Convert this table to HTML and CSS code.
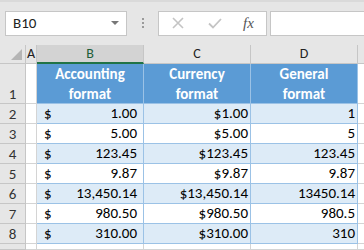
FILE: index.html
```html
<!doctype html>
<html lang="en">
    <head>
        <meta charset="UTF-8" />
        <title>Accounting vs Currency format</title>
        <link rel="stylesheet" href="styles.css">
    </head>
    <body>
        <div class="toolbar">
            <div class="name-box">
                <span>B10</span>
                <svg class="caret" width="8" height="4" viewBox="0 0 8 4"><path d="M0 0h8L4 4z" fill="#777"/></svg>
            </div>
            <div class="grip">
                <span></span><span></span><span></span>
            </div>
            <div class="fx-buttons">
                <svg width="14" height="14" viewBox="0 0 14 14"><path d="M2 2l10 10M12 2L2 12" stroke="#c4c4c4" stroke-width="1.6" fill="none"/></svg>
                <svg width="16" height="14" viewBox="0 0 16 14"><path d="M2 7.5l4 4L14 3" stroke="#c4c4c4" stroke-width="1.8" fill="none"/></svg>
                <span class="fx">fx</span>
            </div>
            <div class="formula"></div>
        </div>

        <div class="sheet head">
            <div class="corner"><span class="tri"></span></div>
            <div class="col-head">A</div>
            <div class="col-head selected">B</div>
            <div class="col-head">C</div>
            <div class="col-head">D</div>
            <div class="col-head last"></div>

            <div class="row-head tall">1</div>
            <div class="cell"></div>
            <div class="cell th">Accounting<br>format</div>
            <div class="cell th">Currency<br>format</div>
            <div class="cell th">General<br>format</div>
            <div class="cell blank"></div>
        </div>

        <div class="sheet" id="rows"></div>

        <script>
            const data = [
                ['1.00', '$1.00', '1'],
                ['5.00', '$5.00', '5'],
                ['123.45', '$123.45', '123.45'],
                ['9.87', '$9.87', '9.87'],
                ['13,450.14', '$13,450.14', '13450.14'],
                ['980.50', '$980.50', '980.5'],
                ['310.00', '$310.00', '310'],
            ];
            const rows = document.getElementById('rows');
            let html = '';
            data.forEach((r, i) => {
                const band = i % 2 === 0 ? ' band' : '';
                html += `<div class="row-head">${i + 2}</div>`;
                html += `<div class="cell"></div>`;
                html += `<div class="cell acc${band}"><span>$</span><span>${r[0]}</span></div>`;
                html += `<div class="cell num cur${band}">${r[1]}</div>`;
                html += `<div class="cell num gen${band}">${r[2]}</div>`;
                html += `<div class="cell blank"></div>`;
            });
            // row 9 is only partly in view
            html += `<div class="row-head partial"></div>`;
            html += `<div class="cell partial"></div><div class="cell partial"></div><div class="cell partial"></div><div class="cell partial"></div><div class="cell blank partial"></div>`;
            rows.innerHTML = html;
        </script>
    </body>
</html>
```

FILE: styles.css
```css
* {
    margin: 0;
    padding: 0;
    box-sizing: border-box;
}

body {
    font-family: Carlito, Lato, "Liberation Sans", sans-serif;
    background: #fff;
    color: #000;
    overflow: hidden;
    width: 364px;
    height: 250px;
}

.toolbar {
    display: flex;
    align-items: center;
    height: 45px;
    padding: 9px 0 10px 5px;
    background: #e6e6e6;
    border-top: 2px solid #dadada;
}

.name-box {
    width: 122px;
    height: 25px;
    background: #fff;
    border: 1px solid #c6c6c6;
    display: flex;
    align-items: center;
    justify-content: space-between;
    padding: 0 7px 0 7px;
    font-size: 15px;
    color: #222;
}

.grip {
    width: 31px;
    display: flex;
    flex-direction: column;
    align-items: center;
    gap: 2px;
}

.grip span {
    width: 2px;
    height: 2px;
    background: #9a9a9a;
}

.fx-buttons {
    width: 109px;
    height: 25px;
    background: #fff;
    border: 1px solid #c6c6c6;
    display: flex;
    align-items: center;
    gap: 22px;
    padding-left: 12px;
}

.fx {
    font-family: "Liberation Serif", serif;
    font-style: italic;
    font-size: 15px;
    color: #555;
    margin-left: -2px;
}

.formula {
    flex: 1;
    height: 25px;
    margin-left: 3px;
    background: #fff;
    border: 1px solid #c6c6c6;
    border-right: none;
}

.sheet {
    display: grid;
    grid-template-columns: 26px 11px 107px 107px 107px 6px;
    grid-auto-rows: 20px;
}

.sheet.head {
    grid-template-rows: 19px 40px;
}

.corner {
    background: #e6e6e6;
    border-right: 1px solid #c6c6c6;
    border-bottom: 1px solid #c6c6c6;
    position: relative;
}

.tri {
    position: absolute;
    right: 3px;
    bottom: 3px;
    width: 0;
    height: 0;
    border-left: 11px solid transparent;
    border-bottom: 11px solid #b5b5b5;
}

.col-head {
    background: #e6e6e6;
    border-right: 1px solid #c6c6c6;
    border-bottom: 1px solid #c6c6c6;
    text-align: center;
    font-size: 14px;
    line-height: 18px;
    color: #222;
}

.col-head.selected {
    background: #d3d3d3;
    color: #1e5e3a;
    border-bottom: 2px solid #217346;
}

.col-head.last {
    border-right: none;
}

.row-head {
    background: #e6e6e6;
    border-right: 1px solid #c6c6c6;
    border-bottom: 1px solid #c6c6c6;
    text-align: center;
    font-size: 15px;
    line-height: 20px;
    color: #333;
}

.row-head.tall {
    padding-top: 20px;
}

.partial {
    height: 6px;
}

.cell {
    border-right: 1px solid #d4d4d4;
    border-bottom: 1px solid #d4d4d4;
    font-size: 15px;
    line-height: 19px;
    white-space: nowrap;
    overflow: hidden;
}

.cell.blank {
    border-right: none;
}

.cell.th {
    background: #5b9bd5;
    color: #fff;
    font-weight: bold;
    text-align: center;
    line-height: 20px;
    border-right-color: #9bc2e6;
    border-bottom-color: #9bc2e6;
}

.acc,
.num {
    border-right-color: #9bc2e6;
    border-bottom-color: #9bc2e6;
}

.acc {
    display: flex;
    justify-content: space-between;
    padding: 0 6px 0 7px;
}

.num {
    text-align: right;
}

.cur {
    padding-right: 2px;
}

.gen {
    padding-right: 2px;
}

.band {
    background: #ddebf7;
}
```
